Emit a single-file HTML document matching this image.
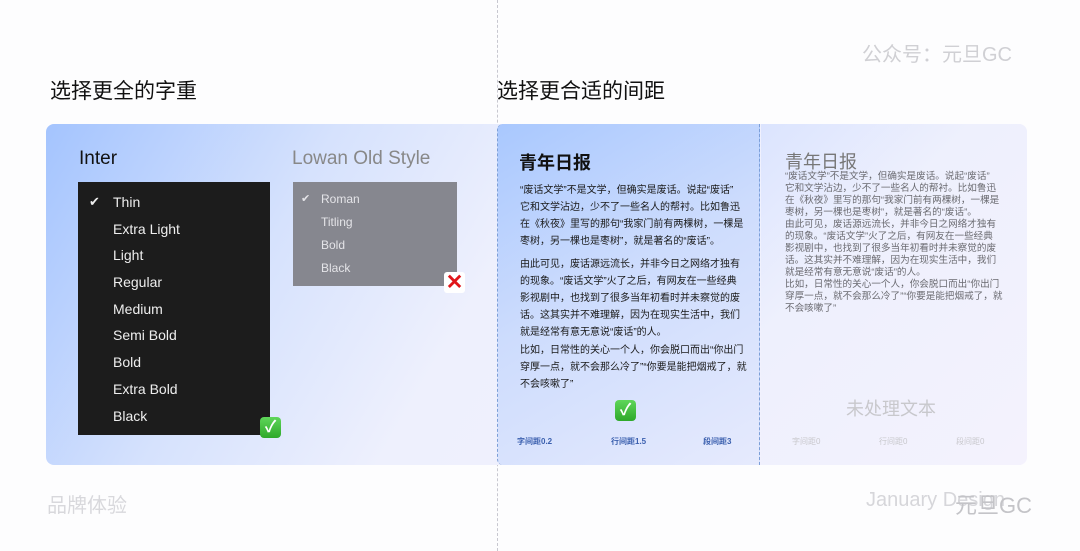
<!DOCTYPE html>
<html><head><meta charset="utf-8"><style>
*{margin:0;padding:0;box-sizing:border-box}
body{width:1080px;height:551px;overflow:hidden;background:#fdfdfe;font-family:"Liberation Sans","Noto Sans CJK SC",sans-serif;position:relative}
.a{position:absolute;white-space:nowrap}
.card{position:absolute;left:46px;top:124px;width:981px;height:341px;border-radius:8px;background:linear-gradient(120deg,#a4c4fe 0%,#d6e2fd 25%,#eef0fd 45%,#f4f2fd 100%);overflow:hidden}
.rp{position:absolute;left:497px;top:124px;width:263px;height:341px;background:linear-gradient(150deg,#a9c8fe 0%,#cddcfd 45%,#e6eafd 100%);border-left:1px dashed #7c9fd8;border-right:1px dashed #7c9fd8;border-radius:6px 0 0 6px}
.far{position:absolute;left:761px;top:124px;width:266px;height:341px;background:linear-gradient(135deg,#dbe4fe 0%,#eef0fd 35%,#f4f2fd 100%);border-radius:0 8px 8px 0}
.blk{position:absolute;left:78px;top:182px;width:192px;height:253px;background:#1c1c1c}
.blk div{position:absolute;left:35px;color:#eee;font-size:14px}
.gry{position:absolute;left:293px;top:182px;width:164px;height:104px;background:#86878f}
.gry div{position:absolute;left:28px;color:#e4e4e8;font-size:12px}
.body{font-size:10px;letter-spacing:0;line-height:17px;color:#1a1a1a}
.raw{font-size:9.6px;line-height:12px;color:#6a6a70;letter-spacing:0}
.ok{position:absolute;width:21px;height:21px;border-radius:4px;background:linear-gradient(#5fd65a,#2ea82a);color:#fff;font-size:16px;font-weight:bold;text-align:center;line-height:21px}
</style></head><body>
<div class="a" style="left:497px;top:0;height:551px;border-left:1px dashed #c8c8d0"></div>
<div class="a" style="left:862px;top:38px;font-size:20px;color:#d0d0d4">公众号：元旦GC</div>
<div class="a" style="left:50px;top:75px;font-size:21px;color:#111">选择更全的字重</div>
<div class="a" style="left:497px;top:75px;font-size:21px;color:#111">选择更合适的间距</div>
<div class="card"></div>
<div class="far"></div>
<div class="rp"></div>
<div class="a" style="left:79px;top:148px;font-size:19px;color:#111">Inter</div>
<div class="a" style="left:292px;top:148px;font-size:19px;color:#888">Lowan Old Style</div>
<div class="blk">
<div style="left:11px;top:12px;font-size:13px">✔</div>
<div style="top:12px">Thin</div><div style="top:39px">Extra Light</div><div style="top:65px">Light</div><div style="top:92px">Regular</div><div style="top:119px">Medium</div><div style="top:145px">Semi Bold</div><div style="top:172px">Bold</div><div style="top:199px">Extra Bold</div><div style="top:226px">Black</div>
</div>
<div class="ok" style="left:260px;top:417px">✓</div>
<div class="gry">
<div style="left:8px;top:10px;font-size:11px">✔</div>
<div style="top:10px">Roman</div><div style="top:33px">Titling</div><div style="top:56px">Bold</div><div style="top:79px">Black</div>
</div>
<div class="a" style="left:444px;top:272px;width:21px;height:21px;background:#fff;border-radius:3px;color:#e0151a;font-size:21px;font-weight:bold;text-align:center;line-height:21px">✕</div>
<div class="a" style="left:519px;top:149px;font-size:18px;font-weight:bold;color:#111">青年日报</div>
<div class="a body" style="left:520px;top:182px">“废话文学”不是文学，但确实是废话。说起“废话”<br>它和文学沾边，少不了一些名人的帮衬。比如鲁迅<br>在《秋夜》里写的那句“我家门前有两棵树，一棵是<br>枣树，另一棵也是枣树”，就是著名的“废话”。</div>
<div class="a body" style="left:520px;top:256px">由此可见，废话源远流长，并非今日之网络才独有<br>的现象。“废话文学”火了之后，有网友在一些经典<br>影视剧中，也找到了很多当年初看时并未察觉的废<br>话。这其实并不难理解，因为在现实生活中，我们<br>就是经常有意无意说“废话”的人。</div>
<div class="a body" style="left:520px;top:342px">比如，日常性的关心一个人，你会脱口而出“你出门<br>穿厚一点，就不会那么冷了”“你要是能把烟戒了，就<br>不会咳嗽了”</div>
<div class="ok" style="left:615px;top:400px">✓</div>
<div class="a" style="left:517px;top:436px;font-size:8px;font-weight:bold;color:#3a5fae">字间距0.2</div>
<div class="a" style="left:611px;top:436px;font-size:8px;font-weight:bold;color:#3a5fae">行间距1.5</div>
<div class="a" style="left:703px;top:436px;font-size:8px;font-weight:bold;color:#3a5fae">段间距3</div>
<div class="a" style="left:785px;top:148px;font-size:18px;color:#777">青年日报</div>
<div class="a raw" style="left:785px;top:171px">“废话文学”不是文学，但确实是废话。说起“废话”<br>它和文学沾边，少不了一些名人的帮衬。比如鲁迅<br>在《秋夜》里写的那句“我家门前有两棵树，一棵是<br>枣树，另一棵也是枣树”，就是著名的“废话”。<br>由此可见，废话源远流长，并非今日之网络才独有<br>的现象。“废话文学”火了之后，有网友在一些经典<br>影视剧中，也找到了很多当年初看时并未察觉的废<br>话。这其实并不难理解，因为在现实生活中，我们<br>就是经常有意无意说“废话”的人。<br>比如，日常性的关心一个人，你会脱口而出“你出门<br>穿厚一点，就不会那么冷了”“你要是能把烟戒了，就<br>不会咳嗽了”</div>
<div class="a" style="left:846px;top:395px;font-size:18px;color:#c8c8cc">未处理文本</div>
<div class="a" style="left:792px;top:436px;font-size:8px;color:#c8c8cc">字间距0</div>
<div class="a" style="left:879px;top:436px;font-size:8px;color:#c8c8cc">行间距0</div>
<div class="a" style="left:956px;top:436px;font-size:8px;color:#c8c8cc">段间距0</div>
<div class="a" style="left:47px;top:489px;font-size:20px;color:#d8d8dc">品牌体验</div>
<div class="a" style="left:866px;top:489px;font-size:20px;color:#d6d6da">January Design</div>
<div class="a" style="left:955px;top:488px;font-size:22px;color:#c4c4c8">元旦GC</div>
</body></html>
